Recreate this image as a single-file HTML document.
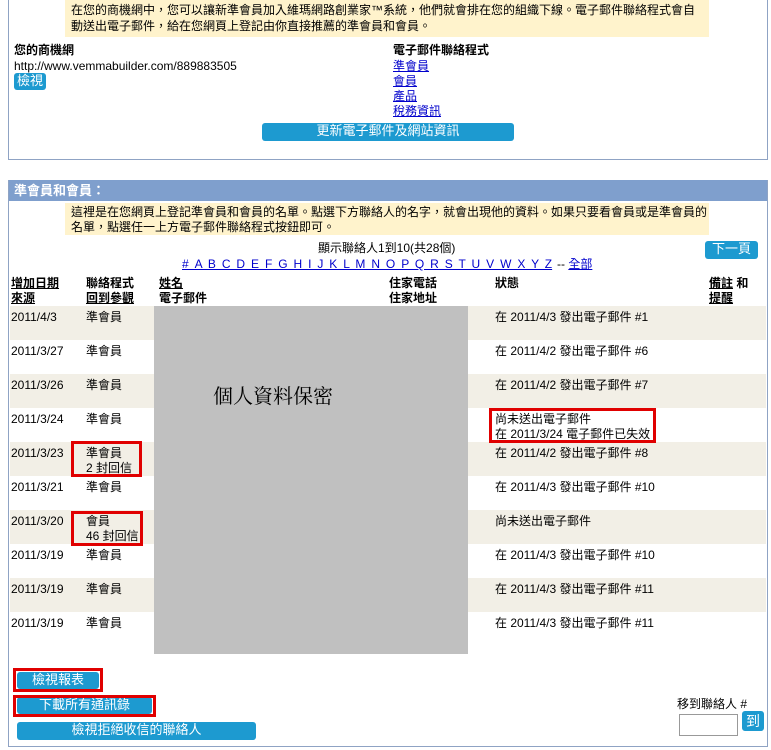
<!DOCTYPE html>
<html><head><meta charset="utf-8"><style>
*{margin:0;padding:0;box-sizing:border-box}
body{width:771px;height:750px;background:#fff;position:relative;overflow:hidden;font-family:"Liberation Sans","Noto Sans CJK TC",sans-serif;font-size:12px;color:#000;line-height:15px}
.a{position:absolute;white-space:nowrap}
.y{position:absolute;background:#fff3cc}
.btn{position:absolute;background:#1d9ad0;color:#fff;text-align:center;border-radius:3px;font-size:13px;line-height:16px}
a,.u{color:#00c;text-decoration:underline}
.b{font-weight:bold}
.h{text-decoration:underline;font-weight:bold}
.red{position:absolute;border:3px solid #e00000}
.row{position:absolute;left:10px;width:756px;height:34px}
</style></head><body>
<div class="a" style="left:8px;top:0;width:760px;height:160px;border:1px solid #8fa3c4;border-top:none"></div>
<div class="y" style="left:65px;top:0;width:644px;height:37px"></div>
<div class="a" style="left:71px;top:3px">在您的商機網中，您可以讓新準會員加入維瑪網路創業家™系統，他們就會排在您的組織下線。電子郵件聯絡程式會自</div>
<div class="a" style="left:71px;top:19px">動送出電子郵件，給在您網頁上登記由你直接推薦的準會員和會員。</div>
<div class="a b" style="left:14px;top:43px">您的商機網</div>
<div class="a" style="left:14px;top:59px">http://www.vemmabuilder.com/889883505</div>
<div class="btn" style="left:14px;top:73px;width:32px;height:17px">檢視</div>
<div class="a b" style="left:393px;top:43px">電子郵件聯絡程式</div>
<div class="a u" style="left:393px;top:59px">準會員</div>
<div class="a u" style="left:393px;top:74px">會員</div>
<div class="a u" style="left:393px;top:89px">產品</div>
<div class="a u" style="left:393px;top:104px">稅務資訊</div>
<div class="btn" style="left:262px;top:123px;width:252px;height:18px">更新電子郵件及網站資訊</div>

<div class="a" style="left:8px;top:180px;width:760px;height:567px;border:1px solid #8fa3c4"></div>
<div class="a" style="left:9px;top:180px;width:758px;height:21px;background:#7f9fcd;color:#fff;font-weight:bold;font-size:13px;line-height:21px;padding-left:5px">準會員和會員：</div>
<div class="y" style="left:65px;top:203px;width:644px;height:32px"></div>
<div class="a" style="left:71px;top:205px">這裡是在您網頁上登記準會員和會員的名單。點選下方聯絡人的名字，就會出現他的資料。如果只要看會員或是準會員的</div>
<div class="a" style="left:71px;top:220px">名單，點選任一上方電子郵件聯絡程式按鈕即可。</div>
<div class="a" style="left:318px;top:241px">顯示聯絡人1到10(共28個)</div>
<div class="btn" style="left:705px;top:241px;width:53px;height:18px">下一頁</div>
<div class="a u" style="left:182px;top:257px;word-spacing:2.6px">#&nbsp;A B C D E F G H I J K L M N O P Q R S T U V W X Y Z</div>
<div class="a" style="left:557px;top:257px">-- <span class="u">全部</span></div>
<div class="a h" style="left:11px;top:276px">增加日期<br>來源</div>
<div class="a b" style="left:86px;top:276px">聯絡程式<br><span class="h">回到參觀</span></div>
<div class="a b" style="left:159px;top:276px"><span class="h">姓名</span><br>電子郵件</div>
<div class="a b" style="left:389px;top:276px">住家電話<br>住家地址</div>
<div class="a b" style="left:495px;top:276px">狀態</div>
<div class="a b" style="left:709px;top:276px"><span class="h">備註</span> 和<br><span class="h">提醒</span></div>

<div class="row" style="top:306px;background:#f2efe6"></div>
<div class="row" style="top:374px;background:#f2efe6"></div>
<div class="row" style="top:442px;background:#f2efe6"></div>
<div class="row" style="top:510px;background:#f2efe6"></div>
<div class="row" style="top:578px;background:#f2efe6"></div>

<div class="a" style="left:11px;top:310px">2011/4/3</div><div class="a" style="left:86px;top:310px">準會員</div><div class="a" style="left:495px;top:310px">在 2011/4/3 發出電子郵件 #1</div>
<div class="a" style="left:11px;top:344px">2011/3/27</div><div class="a" style="left:86px;top:344px">準會員</div><div class="a" style="left:495px;top:344px">在 2011/4/2 發出電子郵件 #6</div>
<div class="a" style="left:11px;top:378px">2011/3/26</div><div class="a" style="left:86px;top:378px">準會員</div><div class="a" style="left:495px;top:378px">在 2011/4/2 發出電子郵件 #7</div>
<div class="a" style="left:11px;top:412px">2011/3/24</div><div class="a" style="left:86px;top:412px">準會員</div><div class="a" style="left:495px;top:412px">尚未送出電子郵件<br>在 2011/3/24 電子郵件已失效</div>
<div class="a" style="left:11px;top:446px">2011/3/23</div><div class="a" style="left:86px;top:446px">準會員<br>2 封回信</div><div class="a" style="left:495px;top:446px">在 2011/4/2 發出電子郵件 #8</div>
<div class="a" style="left:11px;top:480px">2011/3/21</div><div class="a" style="left:86px;top:480px">準會員</div><div class="a" style="left:495px;top:480px">在 2011/4/3 發出電子郵件 #10</div>
<div class="a" style="left:11px;top:514px">2011/3/20</div><div class="a" style="left:86px;top:514px">會員<br>46 封回信</div><div class="a" style="left:495px;top:514px">尚未送出電子郵件</div>
<div class="a" style="left:11px;top:548px">2011/3/19</div><div class="a" style="left:86px;top:548px">準會員</div><div class="a" style="left:495px;top:548px">在 2011/4/3 發出電子郵件 #10</div>
<div class="a" style="left:11px;top:582px">2011/3/19</div><div class="a" style="left:86px;top:582px">準會員</div><div class="a" style="left:495px;top:582px">在 2011/4/3 發出電子郵件 #11</div>
<div class="a" style="left:11px;top:616px">2011/3/19</div><div class="a" style="left:86px;top:616px">準會員</div><div class="a" style="left:495px;top:616px">在 2011/4/3 發出電子郵件 #11</div>

<div class="a" style="left:154px;top:306px;width:314px;height:348px;background:#c0c0c0"></div>
<div class="a" style="left:213px;top:384px;font-size:20px;line-height:26px;font-family:'Liberation Serif','Noto Serif CJK SC',serif">個人資料保密</div>

<div class="red" style="left:489px;top:408px;width:167px;height:35px"></div>
<div class="red" style="left:71px;top:441px;width:71px;height:36px"></div>
<div class="red" style="left:71px;top:511px;width:72px;height:35px"></div>

<div class="btn" style="left:17px;top:672px;width:82px;height:17px">檢視報表</div>
<div class="red" style="left:13px;top:668px;width:90px;height:24px"></div>
<div class="btn" style="left:17px;top:697px;width:135px;height:17px">下載所有通訊錄</div>
<div class="red" style="left:13px;top:695px;width:143px;height:22px"></div>
<div class="btn" style="left:17px;top:722px;width:239px;height:18px">檢視拒絕收信的聯絡人</div>
<div class="a" style="left:677px;top:697px">移到聯絡人 #</div>
<div class="a" style="left:679px;top:714px;width:59px;height:22px;border:1px solid #999;background:#fff"></div>
<div class="btn" style="left:742px;top:711px;width:22px;height:20px;font-size:14px;line-height:20px">到</div>
</body></html>
